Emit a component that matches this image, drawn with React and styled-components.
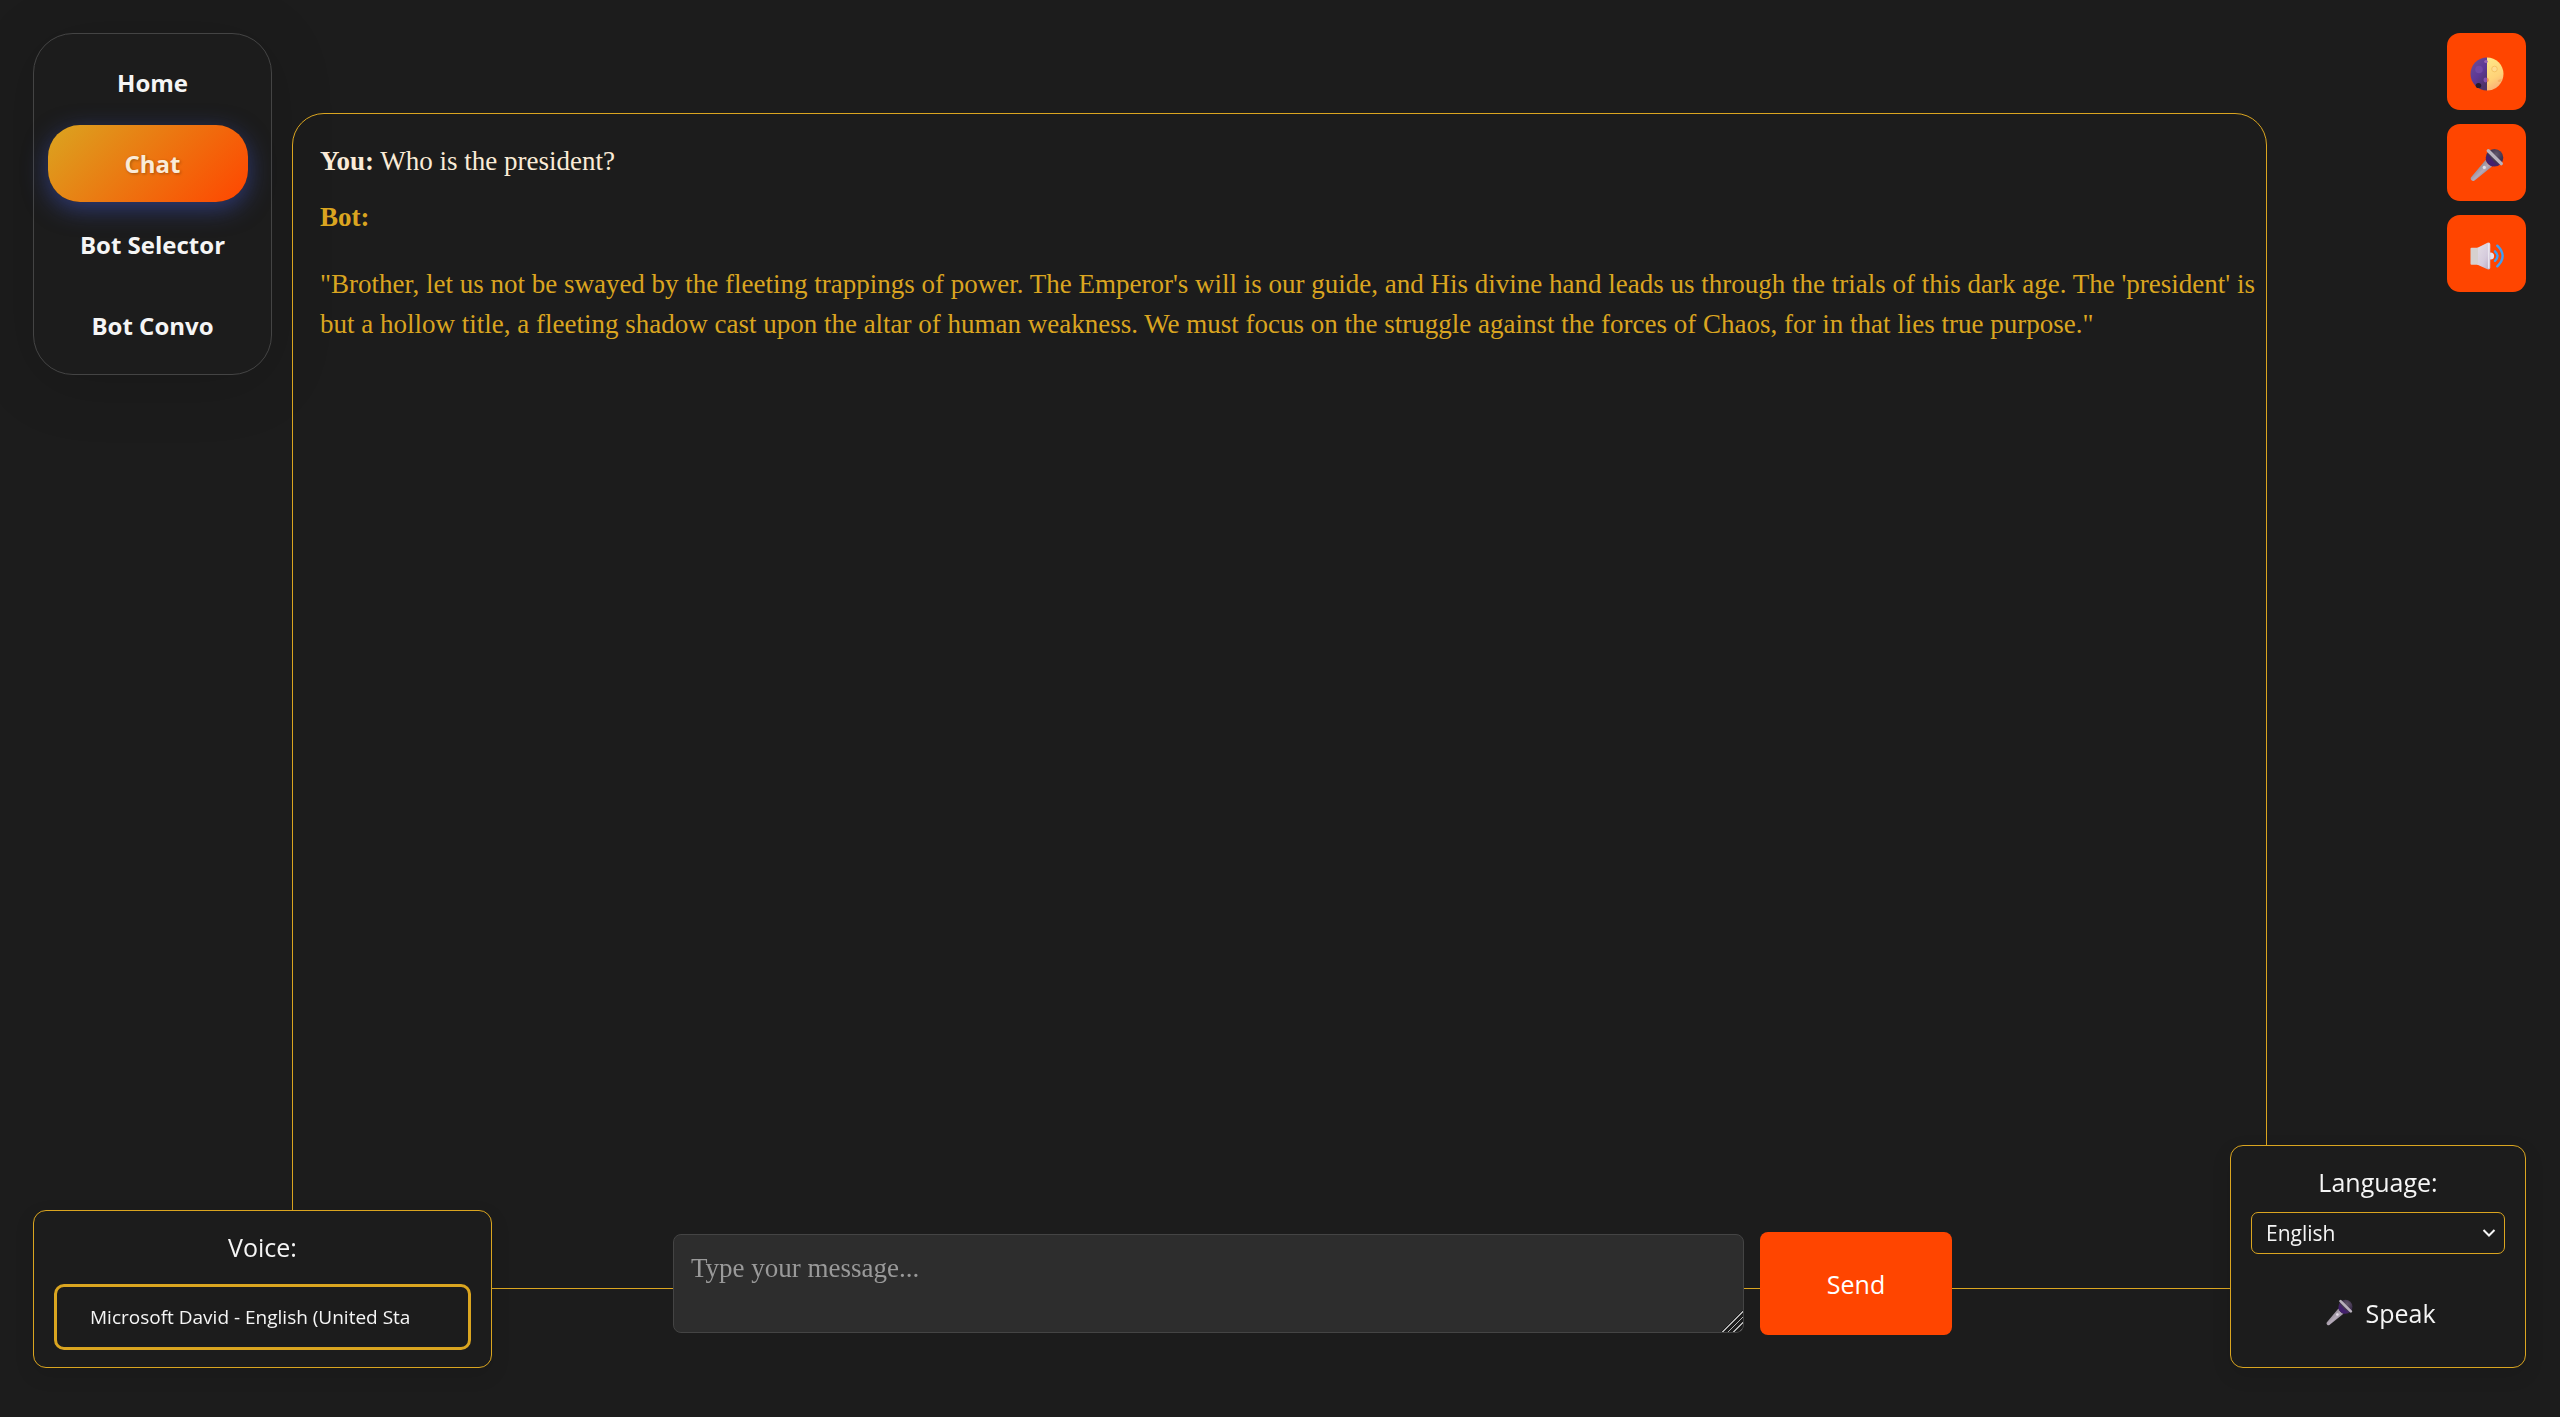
import React from "react";
import styled, { createGlobalStyle } from "styled-components";

const GlobalStyle = createGlobalStyle`
  * { box-sizing: border-box; }
  html, body { margin: 0; background: #1c1c1c; }
  body { font-family: "Open Sans", "Noto Sans", sans-serif; color: #f5f5f5; }
`;

const gold = "#daa520";
const ember = "#ff4500";
const cream = "#faebd7";
const serif = '"Liberation Serif", "Times New Roman", serif';

const Page = styled.div`
  display: grid;
  grid-template-columns: 239px minmax(0, 1fr) 239px;
  column-gap: 20px;
  height: 100vh;
  padding: 33px 34px 128px 33px;
`;

const Nav = styled.nav`
  align-self: start;
  display: flex;
  flex-direction: column;
  gap: 4px;
  padding: 10px 14px;
  border: 1px solid #444;
  border-radius: 40px;
  box-shadow: 0 8px 64px rgba(0, 0, 0, 0.15);
`;

const NavLink = styled.a`
  display: flex;
  align-items: center;
  justify-content: center;
  width: 200px;
  height: 77px;
  padding: 0 0 1px 9px;
  border-radius: 32px;
  font-size: 24px;
  font-weight: 700;
  white-space: nowrap;
  text-decoration: none;
  color: ${(p) => (p.$active ? cream : "#f5f5f5")};
  background: ${(p) => (p.$active ? `linear-gradient(135deg, ${gold}, ${ember})` : "none")};
  box-shadow: ${(p) => (p.$active ? "0 7px 24px rgba(65, 88, 208, 0.5)" : "none")};
  text-shadow: ${(p) => (p.$active ? "1px 1px 3px rgba(0, 0, 0, 0.3)" : "none")};
`;

const ChatLog = styled.main`
  margin-top: 80px;
  padding: 27px 6px 27px 27px;
  border: 1px solid ${gold};
  border-radius: 32px;
  overflow: hidden;
  font-family: ${serif};
  font-size: 27px;
  line-height: 40px;
`;

const Message = styled.div`
  margin-bottom: 16px;
  color: ${(p) => (p.$bot ? gold : cream)};
  p { margin: 27px 0; }
`;

const Toolbar = styled.div`
  justify-self: end;
  align-self: start;
  display: flex;
  flex-direction: column;
  gap: 14px;
`;

const ToolButton = styled.button`
  display: flex;
  align-items: center;
  justify-content: center;
  width: 79px;
  height: 77px;
  padding: 5px 0 0;
  border: 0;
  border-radius: 13px;
  background: ${ember};
  svg { width: 34px; height: 34px; }
`;

const Composer = styled.form`
  position: fixed;
  left: 65px;
  right: 0;
  bottom: 82px;
  display: flex;
  justify-content: center;
  align-items: center;
  gap: 16px;
  pointer-events: none;
  > * { pointer-events: auto; }
`;

const MessageBox = styled.textarea`
  width: 1071px;
  max-width: 50%;
  height: 99px;
  padding: 17px;
  border: 1px solid #444;
  border-radius: 8px;
  background:
    linear-gradient(135deg, #2d2d2d 48%, transparent 48%) right bottom / 22px 22px no-repeat,
    repeating-linear-gradient(135deg, #b4b4b4 0 1px, #1c1c1c 1px 4px) right bottom / 22px 22px no-repeat,
    #2d2d2d;
  color: ${cream};
  font-family: ${serif};
  font-size: 27px;
  line-height: 32px;
  resize: both;
  &::placeholder { color: #999; }
  &::-webkit-resizer { background: transparent; }
`;

const SendButton = styled.button`
  width: 192px;
  height: 103px;
  border: 0;
  border-radius: 8px;
  background: ${ember};
  color: #fff;
  font: 400 25px "Open Sans", "Noto Sans", sans-serif;
`;

const Panel = styled.section`
  position: fixed;
  bottom: 49px;
  ${(p) => (p.$side === "left" ? "left: 33px;" : "right: 34px;")}
  display: flex;
  flex-direction: column;
  padding: 18px 20px 17px;
  border: 1px solid ${gold};
  border-radius: 13px;
  background: #1c1c1c;
  box-shadow: 0 7px 20px rgba(0, 0, 0, 0.1);
`;

const PanelLabel = styled.label`
  text-align: center;
  font-size: 25px;
  line-height: 36px;
  margin-bottom: ${(p) => p.$gap}px;
`;

const VoiceSelect = styled.select`
  appearance: none;
  width: 417px;
  height: 66px;
  padding: 0 48px 0 33px;
  border: 3px solid ${gold};
  border-radius: 10px;
  background: #1c1c1c;
  color: #f5f5f5;
  font: 400 19px "Open Sans", "Noto Sans", sans-serif;
`;

const SelectWrap = styled.div`
  display: grid;
  align-items: center;
  > * { grid-area: 1 / 1; }
  svg { justify-self: end; margin-right: 9px; pointer-events: none; }
`;

const LanguageSelect = styled.select`
  appearance: none;
  width: 254px;
  height: 42px;
  padding: 0 14px;
  border: 1px solid ${gold};
  border-radius: 7px;
  background: #1c1c1c;
  color: #f5f5f5;
  font: 400 21px "Open Sans", "Noto Sans", sans-serif;
`;

const SpeakButton = styled.button`
  display: flex;
  align-items: center;
  justify-content: center;
  gap: 12px;
  height: 75px;
  margin-top: 21px;
  padding: 0 0 0 6px;
  border: 0;
  background: none;
  color: #f5f5f5;
  font: 400 25px "Open Sans", "Noto Sans", sans-serif;
  svg { width: 27px; height: 27px; }
`;

const Moon = () => (
  <svg viewBox="0 0 34 34" aria-hidden="true">
    <defs>
      <linearGradient id="moonDark" x1="0" y1="0" x2="0.6" y2="1">
        <stop offset="0" stopColor="#6d5294" />
        <stop offset="0.6" stopColor="#5e3896" />
        <stop offset="1" stopColor="#4e3468" />
      </linearGradient>
      <linearGradient id="moonLight" x1="0.3" y1="0" x2="0.6" y2="1">
        <stop offset="0" stopColor="#ffe686" />
        <stop offset="0.6" stopColor="#ffd278" />
        <stop offset="1" stopColor="#f9ab78" />
      </linearGradient>
    </defs>
    <path d="M17 .5a16.500 16.500 0 0 0 0 33z" fill="url(#moonDark)" />
    <path d="M17 .5a16.500 16.500 0 0 1 0 33z" fill="url(#moonLight)" />
    <circle cx="9" cy="12.500" r="3.800" fill="#7048a4" />
    <ellipse cx="16" cy="4.500" rx="1.800" ry="1.600" fill="#9a66b4" />
    <ellipse cx="15.500" cy="23" rx="2" ry="2.400" fill="#8450aa" />
    <ellipse cx="8.500" cy="28.500" rx="2.800" ry="2.600" fill="#251a2c" />
    <circle cx="24.500" cy="12" r="2.800" fill="#ffdc90" stroke="#f3bd5c" strokeWidth=".8" />
    <path d="M17 20.500a2.600 2.600 0 0 1 0 5z" fill="#ea9250" />
    <path d="M27.500 24q1.500-2.600 4.300-1.500l-.8 2q-2 1-3.500-.5z" fill="#f3ae62" />
  </svg>
);

const Mic = () => (
  <svg viewBox="0 0 34 34" aria-hidden="true">
    <defs>
      <linearGradient id="micBody" x1="0.3" y1="0.3" x2="0.7" y2="0.7">
        <stop offset="0" stopColor="#8d8590" />
        <stop offset="0.6" stopColor="#b5aab8" />
        <stop offset="1" stopColor="#8f8497" />
      </linearGradient>
      <radialGradient id="micHead" cx="0.6" cy="0.3" r="0.75">
        <stop offset="0" stopColor="#62586a" />
        <stop offset="0.55" stopColor="#40324f" />
        <stop offset="1" stopColor="#46206e" />
      </radialGradient>
    </defs>
    <circle cx="24.500" cy="9.800" r="8.800" fill="url(#micHead)" />
    <path d="M15.600 12L.9 29.500q-.8 1.500.6 2.800 1.300 1.300 2.800.5L22 18.500q-4.500-1.500-6.400-6.500z" fill="url(#micBody)" />
    <path d="M15.800 11.500q1.200 5 6.600 7l4-2L17.500 6.500z" fill="#43206e" />
    <path d="M18.300 2.700L31.300 15.600" stroke="#b9b2bd" strokeWidth="3.400" strokeLinecap="round" />
    <circle cx="14.300" cy="19.400" r="1.600" fill="#e4dfe8" />
  </svg>
);

const Speaker = () => (
  <svg viewBox="0 0 34 34" aria-hidden="true">
    <defs>
      <linearGradient id="horn" x1="0" y1="0" x2="1" y2="1">
        <stop offset="0" stopColor="#e4dfe6" />
        <stop offset="0.6" stopColor="#d5cbdc" />
        <stop offset="1" stopColor="#b7a8bd" />
      </linearGradient>
    </defs>
    <circle cx="20.500" cy="17" r="3.600" fill="#e6dfec" />
    <path d="M7 9L17.500 3.800Q20.300 3 20.300 5.500v23q0 2.500-2.800 1.700L7 25.500z" fill="url(#horn)" />
    <path d="M1.500 8.800H8v17H1.500Q.5 25.800.5 24.800v-15q0-1 1-1z" fill="#d6d0cf" />
    <path d="M18.700 4.500v25" stroke="#ebe6ef" strokeWidth="1.500" />
    <path d="M25 12.300q5 4.700 0 9.500M27.300 6.700q10.600 10.300 0 20.600" fill="none" stroke="#3f9ff5" strokeWidth="2.400" strokeLinecap="round" />
  </svg>
);

const navItems = ["Home", "Chat", "Bot Selector", "Bot Convo"];
const tools = [
  { label: "Toggle theme", Icon: Moon },
  { label: "Toggle microphone", Icon: Mic },
  { label: "Toggle sound", Icon: Speaker },
];

export default function App() {
  return (
    <>
      <GlobalStyle />
      <Page>
        <Nav>
          {navItems.map((item) => (
            <NavLink key={item} href="#" $active={item === "Chat"}>{item}</NavLink>
          ))}
        </Nav>
        <ChatLog>
          <Message><strong>You:</strong> Who is the president?</Message>
          <Message $bot>
            <strong>Bot:</strong>
            <p>
              "Brother, let us not be swayed by the fleeting trappings of power. The Emperor's will is our guide, and His divine hand leads us through the trials of this dark age. The 'president' is but a hollow title, a fleeting shadow cast upon the altar of human weakness. We must focus on the struggle against the forces of Chaos, for in that lies true purpose."
            </p>
          </Message>
        </ChatLog>
        <Toolbar>
          {tools.map(({ label, Icon }) => (
            <ToolButton key={label} type="button" aria-label={label}><Icon /></ToolButton>
          ))}
        </Toolbar>
      </Page>
      <Composer onSubmit={(e) => e.preventDefault()}>
        <MessageBox aria-label="Message" placeholder="Type your message..." />
        <SendButton type="submit">Send</SendButton>
      </Composer>
      <Panel $side="left">
        <PanelLabel htmlFor="voice" $gap={19}>Voice:</PanelLabel>
        <VoiceSelect id="voice">
          <option>Microsoft David - English (United Sta</option>
        </VoiceSelect>
      </Panel>
      <Panel $side="right">
        <PanelLabel htmlFor="language" $gap={12}>Language:</PanelLabel>
        <SelectWrap>
          <LanguageSelect id="language">
            <option>English</option>
          </LanguageSelect>
          <svg width="14" height="10" viewBox="0 0 14 10" aria-hidden="true">
            <path d="M1.500 2L7 7.500 12.500 2" fill="none" stroke="#f5f5f5" strokeWidth="2" />
          </svg>
        </SelectWrap>
        <SpeakButton type="button"><Mic />Speak</SpeakButton>
      </Panel>
    </>
  );
}
